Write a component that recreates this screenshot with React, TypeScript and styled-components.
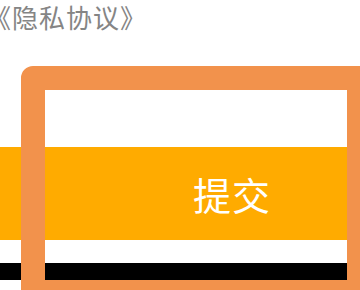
import React from "react";
import styled, { createGlobalStyle } from "styled-components";

const GlobalStyle = createGlobalStyle`
  html, body {
    margin: 0;
    padding: 0;
    background: #ffffff;
  }
  body {
    font-family: "Noto Sans CJK SC", "Noto Sans", sans-serif;
  }
`;

// the visible window onto a wider form
const Screen = styled.div`
  position: relative;
  width: 360px;
  height: 290px;
  overflow: hidden;
  background: #ffffff;
`;

const PolicyLink = styled.div`
  margin-left: -15px;
  height: 33px;
  line-height: 33px;
  font-size: 26px;
  letter-spacing: 1px;
  color: #858585;
  white-space: nowrap;
`;

const SubmitBar = styled.button`
  display: flex;
  align-items: center;
  justify-content: center;
  width: 464px;
  height: 93px;
  margin-top: 114px;
  padding: 0;
  border: none;
  background: #ffab00;
  color: #ffffff;
  font-family: inherit;
  font-size: 38px;
  letter-spacing: 1px;
`;

const BottomStrip = styled.div`
  margin-top: 23px;
  width: 100%;
  height: 17px;
  background: #000000;
`;

// highlight frame laid over the button area
const FocusFrame = styled.div`
  position: absolute;
  left: 21px;
  top: 66px;
  box-sizing: border-box;
  width: 350px;
  height: 238px;
  border: 24px solid #f2924c;
  border-radius: 12px;
  pointer-events: none;
`;

export default function App() {
  return (
    <>
      <GlobalStyle />
      <Screen>
        <PolicyLink>《隐私协议》</PolicyLink>
        <SubmitBar>提交</SubmitBar>
        <BottomStrip />
        <FocusFrame />
      </Screen>
    </>
  );
}
